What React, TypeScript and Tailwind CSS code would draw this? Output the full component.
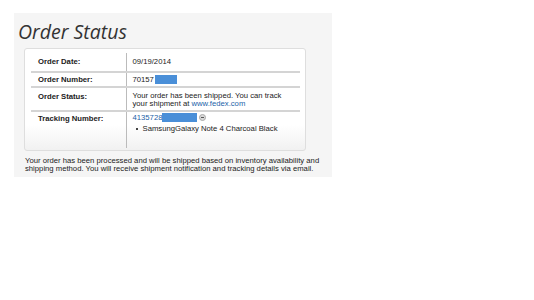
export default function App() {
  return (
    <div className="w-[534px] h-[300px] bg-white font-['Liberation_Sans',Arial,sans-serif]">
      <div className="ml-[14px] mt-[13px] w-[318px] h-[164px] bg-[#f5f5f5] pt-[5px]">
        <h1 className="ml-[4px] text-[19.5px] leading-[27px] italic font-medium text-[#333] font-['Open_Sans',sans-serif]">
          Order Status
        </h1>
        <div className="ml-[10px] mt-[3px] w-[282px] h-[103px] rounded-[3px] border border-[#dedede] bg-gradient-to-b from-white from-75% to-[#f1f1f1] px-[6px] pt-[4px]">
          <table className="w-[269px] border-collapse text-[7.7px] text-[#222]">
            <tbody>
              <tr className="border-b-2 border-[#d4d4d4]">
                <td className="w-[95px] pl-[7px] h-[19px] font-bold border-r border-[#bbb]">Order Date:</td>
                <td className="pl-[6px]">09/19/2014</td>
              </tr>
              <tr className="border-b-2 border-[#d4d4d4]">
                <td className="pl-[7px] h-[15px] font-bold border-r border-[#bbb]">Order Number:</td>
                <td className="pl-[6px]">
                  <span className="inline-flex items-center">
                    70157<span className="inline-block w-[22px] h-[9px] bg-[#4a8fd8] ml-[1px]" />
                  </span>
                </td>
              </tr>
              <tr className="border-b-2 border-[#d4d4d4]">
                <td className="pl-[7px] align-top pt-[3px] h-[24px] font-bold border-r border-[#bbb]">Order Status:</td>
                <td className="pl-[6px] pt-[2px] leading-[8px]">
                  Your order has been shipped. You can track<br />
                  your shipment at <span className="text-[#1b5fa8]">www.fedex.com</span>
                </td>
              </tr>
              <tr>
                <td className="pl-[7px] align-top pt-[1px] h-[37px] font-bold border-r border-[#bbb]">Tracking Number:</td>
                <td className="pl-[6px] align-top pt-[1px]">
                  <div className="flex items-center h-[9px] text-[#1b5fa8]">
                    4135728<span className="inline-block w-[35px] h-[9px] bg-[#4a8fd8]" />
                    <span className="ml-[2px] w-[7px] h-[7px] rounded-full bg-[#d8d8d8] border border-[#aaa] flex items-center justify-center">
                      <span className="w-[3px] h-px bg-[#555]" />
                    </span>
                  </div>
                  <div className="flex items-center h-[9px] mt-[2px] pl-[3px]">
                    <span className="w-[2px] h-[2px] bg-[#444] mr-[5px]" />
                    SamsungGalaxy Note 4 Charcoal Black
                  </div>
                </td>
              </tr>
            </tbody>
          </table>
        </div>
        <p className="ml-[11px] mt-[6px] text-[7.7px] leading-[8px] text-[#222]">
          Your order has been processed and will be shipped based on inventory availability and<br />
          shipping method. You will receive shipment notification and tracking details via email.
        </p>
      </div>
    </div>
  );
}
